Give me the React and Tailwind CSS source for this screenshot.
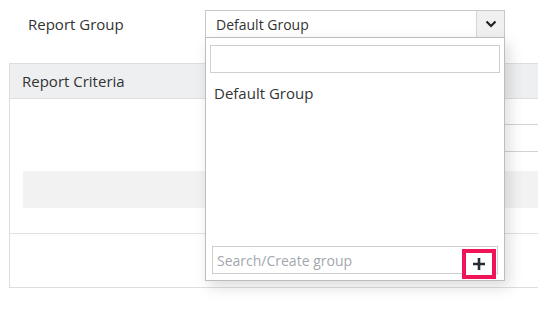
import { useState } from "react";

export default function App() {
  const [query, setQuery] = useState("");
  const [newGroup, setNewGroup] = useState("");

  return (
    <div
      className="relative h-[318px] w-[538px] overflow-hidden bg-white text-[#333]"
      style={{ fontFamily: '"Open Sans", "Noto Sans", sans-serif' }}
    >
      {/* Report group row */}
      <div className="flex h-[63px] items-start pt-[10px]">
        <div className="w-[205px] pl-[28px] pt-[3px] text-[15px]">Report Group</div>
        <div className="flex h-[28px] w-[300px] border border-[#c8c8c8] bg-white">
          <div className="flex flex-1 items-center pl-[10px] text-[14px]">Default Group</div>
          <div className="flex w-[28px] items-center justify-center border-l border-[#d6d6d6] bg-[#f0f0f0]">
            <svg width="12" height="8" viewBox="0 0 12 8">
              <path d="M1.5 1.5 L6 6 L10.5 1.5" fill="none" stroke="#222" strokeWidth="2.2" />
            </svg>
          </div>
        </div>
      </div>

      {/* Report criteria panel */}
      <div className="ml-[9px] w-[560px] border border-[#dedede]">
        <div className="flex h-[35px] items-center border-b border-[#dedede] bg-[#eeeff1] pl-[12px] text-[15px]">
          Report Criteria
        </div>
        <div className="h-[134px] pt-[25px]">
          <div className="ml-[300px] h-[28px] w-[260px] border border-[#d2d2d2]" />
          <div className="ml-[13px] mt-[19px] h-[37px] bg-[#f2f2f2]" />
        </div>
        <div className="h-[54px] border-t border-[#e2e2e2]" />
      </div>

      {/* Dropdown overlay */}
      <div className="absolute left-[205px] top-[37px] flex h-[244px] w-[300px] flex-col border border-[#bdbdbd] bg-white shadow-[4px_6px_14px_rgba(0,0,0,0.14)]">
        <div className="px-[4px] pt-[7px]">
          <input
            value={query}
            onChange={(e) => setQuery(e.target.value)}
            className="h-[28px] w-full border border-[#cfcfcf] px-[6px] text-[14px] outline-none"
          />
        </div>
        <div className="pl-[8px] pt-[9px] text-[15px]">Default Group</div>
        <div className="mt-auto px-[6px] pb-[6px]">
          <div className="relative">
            <input
              value={newGroup}
              onChange={(e) => setNewGroup(e.target.value)}
              placeholder="Search/Create group"
              className="h-[28px] w-full border border-[#cfcfcf] pl-[4px] pr-[36px] text-[14px] outline-none placeholder:text-[#a3a7ad]"
            />
            <button className="absolute right-[2px] top-[3px] flex h-[30px] w-[34px] items-center justify-center border-4 border-[#ef1458] bg-white">
              <svg width="14" height="14" viewBox="0 0 14 14">
                <path d="M7 1 V13 M1 7 H13" stroke="#262b36" strokeWidth="2.6" />
              </svg>
            </button>
          </div>
        </div>
      </div>
    </div>
  );
}
